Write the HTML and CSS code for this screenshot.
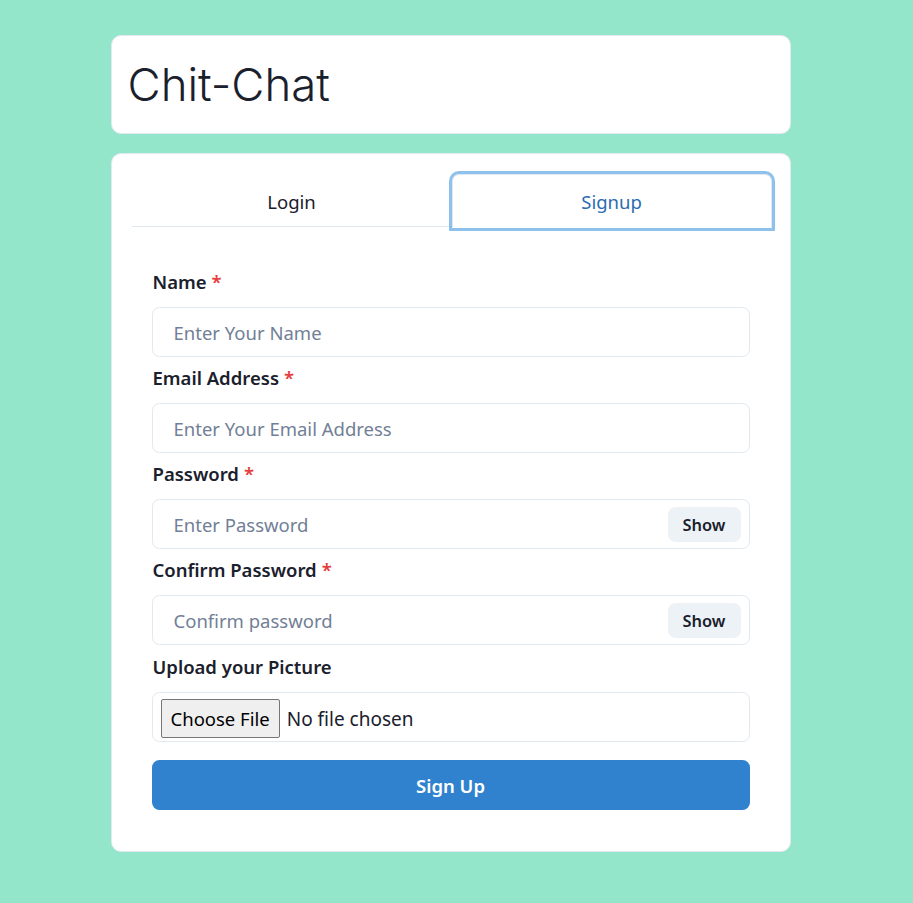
FILE: index.html
```html
<!DOCTYPE html>
<html lang="en">
<head>
<meta charset="utf-8">
<title>Chit-Chat</title>
<link rel="stylesheet" href="styles.css">
</head>
<body>
<div class="page">
  <div class="container">
    <div class="brand">
      <h1 class="brand-title">Chit-Chat</h1>
    </div>
    <div class="card">
      <div class="tablist">
        <button class="tab" type="button">Login</button>
        <button class="tab tab-selected" type="button">Signup</button>
      </div>
      <div class="panel">
        <form class="stack">
          <div class="field">
            <label class="label">Name<span class="req">*</span></label>
            <input class="input" type="text" placeholder="Enter Your Name">
          </div>
          <div class="field">
            <label class="label">Email Address<span class="req">*</span></label>
            <input class="input" type="email" placeholder="Enter Your Email Address">
          </div>
          <div class="field">
            <label class="label">Password<span class="req">*</span></label>
            <div class="group">
              <input class="group-input" type="password" placeholder="Enter Password">
              <div class="right-el"><button class="show-btn" type="button">Show</button></div>
            </div>
          </div>
          <div class="field">
            <label class="label">Confirm Password<span class="req">*</span></label>
            <div class="group">
              <input class="group-input" type="password" placeholder="Confirm password">
              <div class="right-el"><button class="show-btn" type="button">Show</button></div>
            </div>
          </div>
          <div class="field field-file">
            <label class="label">Upload your Picture</label>
            <input class="file-input" type="file" accept="image/*">
          </div>
          <button class="submit" type="button">Sign Up</button>
        </form>
      </div>
    </div>
  </div>
</div>
</body>
</html>
```

FILE: styles.css
```css
* { box-sizing: border-box; }

body {
  margin: 0;
  background: #94e6ca;
  font-family: "Noto Sans", "Open Sans", sans-serif;
  color: #1a202c;
  min-height: 903px;
}

.page {
  padding: 35px 12px 40px 0;
}

.container {
  width: 680px;
  margin: 0 auto;
  display: flex;
  flex-direction: column;
  gap: 19px;
}

.brand {
  background: #fff;
  border: 1px solid #e2e8f0;
  border-radius: 10px;
  padding: 15px 15px 15px 16px;
}

.brand-title {
  margin: 0;
  font-family: Inter, "Noto Sans", sans-serif;
  font-weight: 280;
  font-size: 45.5px;
  line-height: 67px;
  color: #1a202c;
}

.card {
  background: #fff;
  border: 1px solid #e2e8f0;
  border-radius: 10px;
  padding: 20px 18px 20px 20px;
}

.tablist {
  display: flex;
  border-bottom: 1px solid #e2e8f0;
  margin-bottom: 20px;
}

.tab {
  flex: 1;
  height: 54px;
  margin-bottom: -2px;
  border: 1px solid transparent;
  border-radius: 7px 7px 0 0;
  background: transparent;
  font-family: inherit;
  font-size: 18.5px;
  color: #1a202c;
  padding: 0;
  cursor: pointer;
}

.tab-selected {
  color: #2b6cb0;
  background: #fff;
  border-color: #e2e8f0;
  border-bottom-color: #fff;
  box-shadow: 0 0 0 3px rgba(66, 153, 225, 0.6);
}

.panel {
  padding: 20px 22px 21px 20px;
}

.stack {
  display: flex;
  flex-direction: column;
  gap: 6px;
}

.field {
  display: flex;
  flex-direction: column;
}

.label {
  font-size: 18.5px;
  font-weight: 600;
  line-height: 30px;
  margin-bottom: 10px;
  padding-left: 1px;
}

.field-file .label {
  padding-top: 1px;
}

.req {
  color: #e53e3e;
  margin-left: 5px;
}

.input,
.group {
  height: 50px;
  border: 1px solid #e2e8f0;
  border-radius: 7.5px;
  background: #fff;
}

.input {
  width: 100%;
  padding: 0 20px 0 21px;
  font-family: inherit;
  font-size: 18.5px;
  color: #1a202c;
  outline: none;
}

.group {
  display: flex;
  align-items: center;
}

.group-input {
  flex: 1;
  min-width: 0;
  height: 100%;
  border: 0;
  background: transparent;
  padding: 0 20px 0 21px;
  font-family: inherit;
  font-size: 18.5px;
  color: #1a202c;
  outline: none;
}

.input::placeholder,
.group-input::placeholder {
  color: #718096;
  opacity: 1;
}

.right-el {
  width: 89px;
  padding-right: 1px;
  display: flex;
  justify-content: flex-end;
  align-items: center;
  padding-right: 8px;
}

.show-btn {
  width: 73px;
  height: 35px;
  border: 0;
  border-radius: 7.5px;
  background: #edf2f7;
  font-family: inherit;
  font-size: 16.4px;
  font-weight: 600;
  color: #1a202c;
  padding: 0;
}

.file-input {
  width: 100%;
  height: 50px;
  border: 1px solid #e2e8f0;
  border-radius: 7.5px;
  padding: 6px 8px;
  font-family: inherit;
  font-size: 19px;
  color: #1a202c;
  background: #fff;
}

.file-input::file-selector-button {
  font-family: inherit;
  font-size: 18.5px;
  height: 39px;
  padding: 0 9px;
  margin-right: 7px;
  background: #efefef;
  border: 1px solid #767676;
  border-radius: 2px;
  color: #000;
}

.submit {
  margin-top: 12px;
  height: 50px;
  border: 0;
  border-radius: 7.5px;
  background: #3182ce;
  color: #fff;
  font-family: inherit;
  font-size: 18.5px;
  font-weight: 600;
}
```
